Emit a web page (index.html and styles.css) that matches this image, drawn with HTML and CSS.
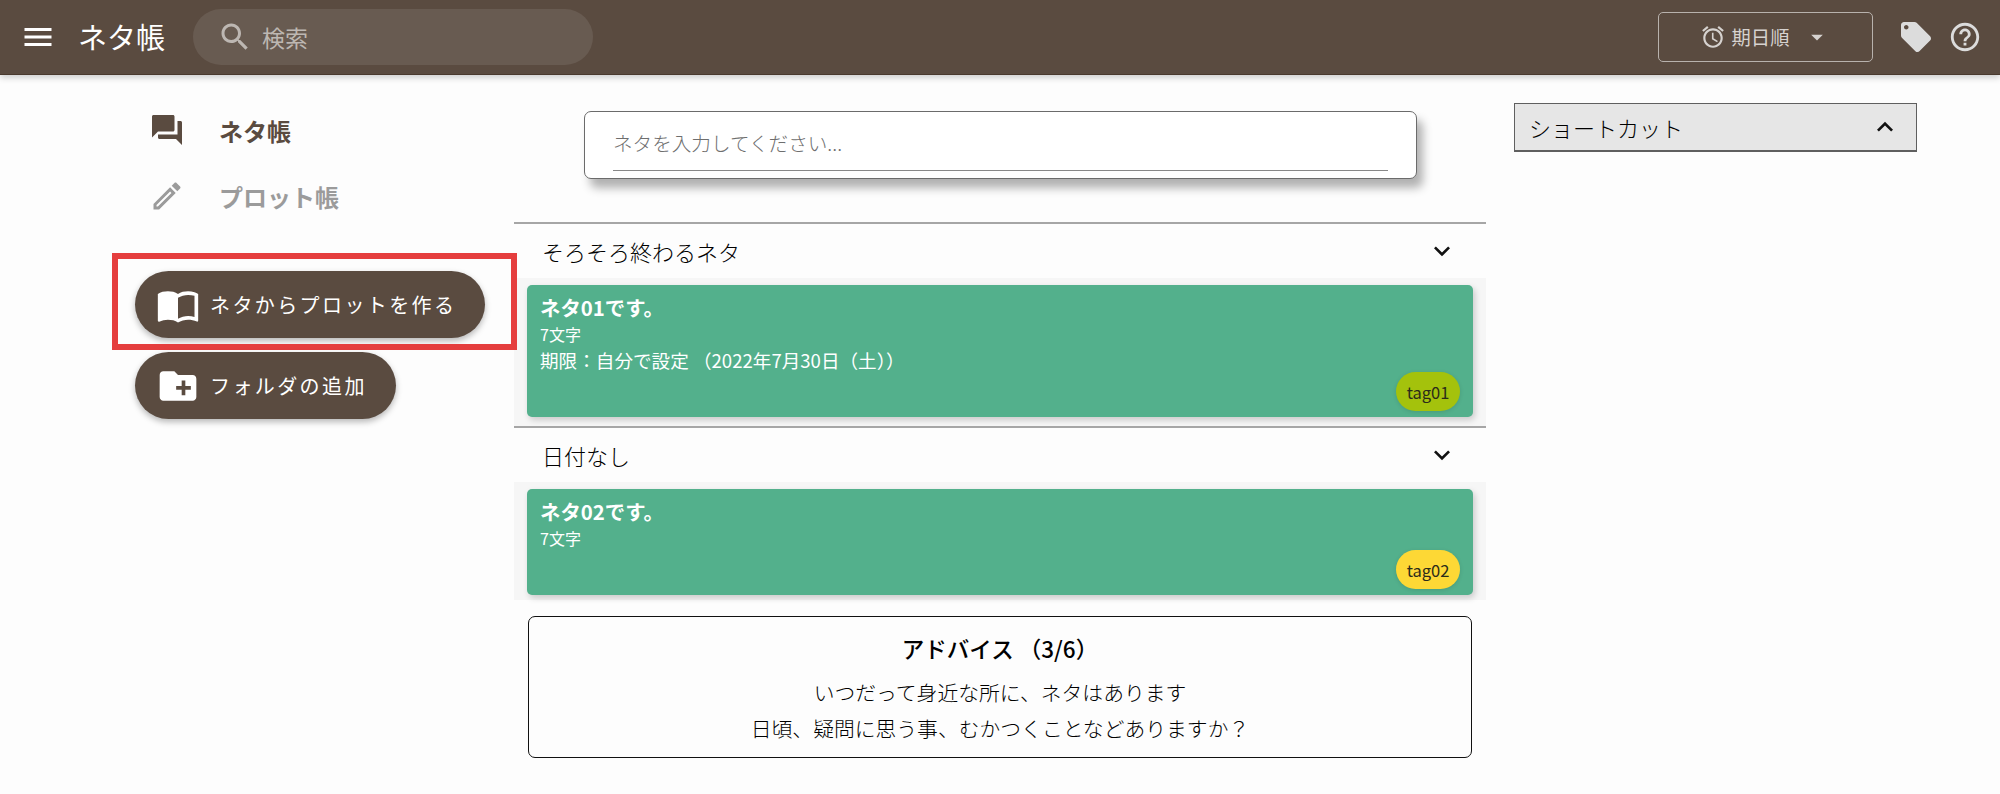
FILE: index.html
```html
<!DOCTYPE html>
<html lang="ja">
<head>
    <meta charset="UTF-8">
    <meta name="viewport" content="width=device-width, initial-scale=1.0">
    <title>ネタ帳</title>
    <link rel="stylesheet" href="styles.css">
</head>
<body>
    <header class="app-bar">
        <svg class="icon menu-icon" viewBox="0 0 24 24"><path d="M3 18h18v-2H3v2zm0-5h18v-2H3v2zm0-7v2h18V6H3z"/></svg>
        <div class="app-title">ネタ帳</div>
        <div class="search-box">
            <svg class="icon search-icon" viewBox="0 0 24 24"><path d="M15.5 14h-.79l-.28-.27C15.41 12.59 16 11.11 16 9.5 16 5.91 13.09 3 9.5 3S3 5.91 3 9.5 5.91 16 9.5 16c1.61 0 3.09-.59 4.23-1.57l.27.28v.79l5 4.99L20.49 19l-4.99-5zm-6 0C7.01 14 5 11.99 5 9.5S7.01 5 9.5 5 14 7.01 14 9.5 11.99 14 9.5 14z"/></svg>
            <span>検索</span>
        </div>
        <div class="sort-button">
            <svg class="icon alarm-icon" viewBox="0 0 24 24"><path d="M22 5.72l-4.6-3.86-1.29 1.53 4.6 3.86L22 5.72zM7.88 3.39L6.6 1.86 2 5.71l1.29 1.53 4.59-3.85zM12.5 8H11v6l4.75 2.85.75-1.23-4-2.37V8zM12 4c-4.97 0-9 4.03-9 9s4.03 9 9 9c4.97 0 9-4.03 9-9s-4.03-9-9-9zm0 16c-3.87 0-7-3.13-7-7s3.13-7 7-7 7 3.13 7 7-3.13 7-7 7z"/></svg>
            <span>期日順</span>
            <svg class="icon caret-icon" viewBox="0 0 24 24"><path d="M7 10l5 5 5-5z"/></svg>
        </div>
        <svg class="icon tag-icon" viewBox="0 0 24 24"><path d="M21.41 11.58l-9-9C12.05 2.22 11.55 2 11 2H4c-1.1 0-2 .9-2 2v7c0 .55.22 1.05.59 1.42l9 9c.36.36.86.58 1.41.58.55 0 1.05-.22 1.41-.59l7-7c.37-.36.59-.86.59-1.41 0-.55-.23-1.06-.59-1.42zM5.5 7C4.67 7 4 6.33 4 5.5S4.67 4 5.5 4 7 4.67 7 5.5 6.33 7 5.5 7z"/></svg>
        <svg class="icon help-icon" viewBox="0 0 24 24"><path d="M11 18h2v-2h-2v2zm1-16C6.48 2 2 6.48 2 12s4.48 10 10 10 10-4.48 10-10S17.52 2 12 2zm0 18c-4.41 0-8-3.59-8-8s3.59-8 8-8 8 3.59 8 8-3.59 8-8 8zm0-14c-2.21 0-4 1.79-4 4h2c0-1.1.9-2 2-2s2 .9 2 2c0 2-3 1.75-3 5h2c0-2.25 3-2.5 3-5 0-2.21-1.79-4-4-4z"/></svg>
    </header>

    <main class="layout">
        <aside class="sidebar">
            <div class="nav-item active">
                <svg class="icon nav-icon" viewBox="0 0 24 24"><path d="M21 6h-2v9H6v2c0 .55.45 1 1 1h11l4 4V7c0-.55-.45-1-1-1zm-4 6V3c0-.55-.45-1-1-1H3c-.55 0-1 .45-1 1v14l4-4h10c.55 0 1-.45 1-1z"/></svg>
                <span>ネタ帳</span>
            </div>
            <div class="nav-item">
                <svg class="icon nav-icon" viewBox="0 0 24 24"><path d="M14.06 9.02l.92.92L5.92 19H5v-.92l9.06-9.06M17.66 3c-.25 0-.51.1-.7.29l-1.83 1.83 3.75 3.75 1.83-1.83c.39-.39.39-1.02 0-1.41l-2.34-2.34c-.2-.2-.45-.29-.71-.29zm-3.6 3.19L3 17.25V21h3.75L17.81 9.94l-3.75-3.75z"/></svg>
                <span>プロット帳</span>
            </div>
            <div class="fab first-fab">
                <svg class="icon fab-icon" viewBox="0 0 24 24"><path d="M21 5c-1.11-.35-2.33-.5-3.5-.5-1.95 0-4.05.4-5.5 1.5-1.45-1.1-3.55-1.5-5.5-1.5S2.45 4.9 1 6v14.65c0 .25.25.5.5.5.1 0 .15-.05.25-.05C3.1 20.45 5.05 20 6.5 20c1.95 0 4.05.4 5.5 1.5 1.35-.85 3.8-1.5 5.5-1.5 1.65 0 3.35.3 4.75 1.05.1.05.15.05.25.05.25 0 .5-.25.5-.5V6c-.6-.45-1.25-.75-2-1zm0 13.5c-1.1-.35-2.3-.5-3.5-.5-1.7 0-4.15.65-5.5 1.5V8c1.35-.85 3.8-1.5 5.5-1.5 1.2 0 2.4.15 3.5.5v11.5z"/></svg>
                <span>ネタからプロットを作る</span>
                <div class="highlight"></div>
            </div>
            <div class="fab">
                <svg class="icon fab-icon" viewBox="0 0 24 24"><path d="M20 6h-8l-2-2H4c-1.11 0-1.99.89-1.99 2L2 18c0 1.11.89 2 2 2h16c1.11 0 2-.89 2-2V8c0-1.11-.89-2-2-2zm-1 8h-3v3h-2v-3h-3v-2h3V9h2v3h3v2z"/></svg>
                <span>フォルダの追加</span>
            </div>
        </aside>

        <section class="content">
            <div class="input-card">
                <div class="input-line">ネタを入力してください...</div>
            </div>

            <div class="group first-group">
                <div class="group-head">
                    <span>そろそろ終わるネタ</span>
                    <svg class="icon chevron" viewBox="0 0 24 24"><path d="M16.59 8.59L12 13.17 7.41 8.59 6 10l6 6 6-6z"/></svg>
                </div>
                <div class="group-body">
                    <div class="note-card tall">
                        <div class="note-title">ネタ01です。</div>
                        <div class="note-count">7文字</div>
                        <div class="note-limit">期限：自分で設定 （2022年7月30日（土））</div>
                        <div class="tag tag-green">tag01</div>
                    </div>
                </div>
            </div>

            <div class="group last-group">
                <div class="group-head">
                    <span>日付なし</span>
                    <svg class="icon chevron" viewBox="0 0 24 24"><path d="M16.59 8.59L12 13.17 7.41 8.59 6 10l6 6 6-6z"/></svg>
                </div>
                <div class="group-body">
                    <div class="note-card">
                        <div class="note-title">ネタ02です。</div>
                        <div class="note-count">7文字</div>
                        <div class="tag tag-yellow">tag02</div>
                    </div>
                </div>
            </div>

            <div class="advice">
                <div class="advice-title">アドバイス （3/6）</div>
                <div class="advice-text">いつだって身近な所に、ネタはあります</div>
                <div class="advice-text">日頃、疑問に思う事、むかつくことなどありますか？</div>
            </div>
        </section>

        <aside class="right-panel">
            <div class="shortcut">
                <span>ショートカット</span>
                <svg class="icon chevron" viewBox="0 0 24 24"><path d="M12 8l-6 6 1.41 1.41L12 10.83l4.59 4.58L18 14z"/></svg>
            </div>
        </aside>
    </main>
</body>
</html>
```

FILE: styles.css
```css
* {
    box-sizing: border-box;
}
body {
    margin: 0;
    background-color: #fdfdfd;
    color: #1c1c1c;
    font-family: "Noto Sans CJK JP", "Noto Sans", sans-serif;
    overflow: hidden;
}
.icon {
    display: block;
    flex: none;
    fill: currentColor;
}

/* app bar */
.app-bar {
    display: flex;
    align-items: center;
    height: 75px;
    padding-left: 20px;
    background-color: #5a4b40;
    border-bottom: 1px solid #4a3a2e;
    box-shadow: 0 3px 6px rgba(0, 0, 0, 0.18);
    color: #fff;
}
.menu-icon {
    width: 36px;
    height: 36px;
}
.app-title {
    width: 88px;
    margin-left: 22px;
    padding-bottom: 2px;
    font-size: 29px;
    line-height: 1;
    white-space: nowrap;
}
.search-box {
    display: flex;
    align-items: center;
    width: 400px;
    height: 56px;
    margin-left: 27px;
    margin-bottom: 1px;
    padding-left: 24px;
    border-radius: 28px;
    background-color: rgba(255, 255, 255, 0.09);
    color: #bdb7b2;
    font-size: 23px;
}
.search-icon {
    width: 36px;
    height: 36px;
    margin-right: 9px;
}
.sort-button {
    display: flex;
    align-items: center;
    justify-content: center;
    width: 215px;
    height: 50px;
    margin-left: auto;
    border: 1px solid #b8b2ad;
    border-radius: 5px;
    color: #d6d2cf;
    font-size: 19.3px;
}
.alarm-icon {
    width: 26px;
    height: 26px;
    margin-right: 6px;
}
.caret-icon {
    width: 28px;
    height: 28px;
    margin-left: 14px;
}
.tag-icon {
    width: 36px;
    height: 36px;
    margin-left: 25px;
    color: #dcdcdc;
}
.help-icon {
    width: 34px;
    height: 34px;
    margin-left: 14px;
    margin-right: 18px;
    color: #dcdcdc;
}

/* page columns */
.layout {
    display: flex;
    align-items: flex-start;
}
.sidebar {
    flex: none;
    width: 514px;
    padding: 22px 0 0 135px;
}
.nav-item {
    display: flex;
    align-items: center;
    height: 66px;
    color: #9b9b9b;
    font-size: 24px;
    font-weight: 700;
}
.nav-item.active {
    color: #5a4b40;
}
.nav-icon {
    width: 36px;
    height: 36px;
    margin-left: 14px;
    margin-right: 34px;
}
.fab {
    position: relative;
    display: flex;
    align-items: center;
    width: max-content;
    height: 67px;
    margin-bottom: 14px;
    padding: 0 29px 0 21px;
    border-radius: 34px;
    background-color: #5a4b40;
    box-shadow: 0 3px 6px rgba(0, 0, 0, 0.28);
    color: #fff;
    font-size: 20px;
    letter-spacing: 2.4px;
}
.first-fab {
    margin-top: 42px;
}
.fab-icon {
    width: 44px;
    height: 44px;
    margin-right: 10px;
}
.highlight {
    position: absolute;
    top: -18px;
    left: -23px;
    width: 405px;
    height: 97px;
    border: 6px solid #e53e3e;
}

/* center column */
.content {
    flex: none;
    width: 972px;
    padding-top: 36px;
}
.input-card {
    width: 833px;
    height: 68px;
    margin-left: 70px;
    padding: 0 28px;
    border: 1px solid #6b6b6b;
    border-radius: 7px;
    background-color: #fff;
    box-shadow: 6px 9px 10px rgba(0, 0, 0, 0.3);
}
.input-line {
    height: 59px;
    padding-top: 17px;
    border-bottom: 1px solid #888;
    color: #6e6e6e;
    font-size: 19.6px;
    font-weight: 300;
    line-height: 27px;
}
.first-group {
    margin-top: 43px;
}
.group {
    border-top: 2px solid #a6a6a6;
}
.group-head {
    display: flex;
    align-items: center;
    justify-content: space-between;
    height: 54px;
    padding: 0 28px;
    color: #000;
    font-size: 22px;
    font-weight: 300;
}
.chevron {
    width: 32px;
    height: 32px;
    color: #111;
}
.group-body {
    padding: 7px 13px 9px;
    background-color: #f6f6f6;
}
.last-group .group-body {
    padding-bottom: 5px;
}
.note-card {
    position: relative;
    height: 106px;
    padding: 7px 13px;
    border-radius: 5px;
    background-color: #53b08c;
    box-shadow: 2px 3px 6px rgba(0, 0, 0, 0.18);
    color: #fff;
}
.note-card.tall {
    height: 132px;
}
.note-title {
    font-size: 20.4px;
    font-weight: 700;
    line-height: 30px;
}
.note-count {
    font-size: 16px;
    line-height: 25px;
}
.note-limit {
    font-size: 18.6px;
    line-height: 25px;
}
.tag {
    position: absolute;
    right: 13px;
    bottom: 6px;
    width: 64px;
    height: 39px;
    border-radius: 20px;
    box-shadow: 0 1px 4px rgba(0, 0, 0, 0.12);
    color: #2b2b1a;
    font-size: 16.5px;
    line-height: 40px;
    text-align: center;
}
.tag-green {
    background-color: #a4c20c;
}
.tag-yellow {
    background-color: #fdd835;
}
.advice {
    width: 944px;
    height: 142px;
    margin: 16px 0 0 14px;
    padding-top: 13px;
    border: 1px solid #111;
    border-radius: 7px;
    color: #000;
    text-align: center;
}
.advice-title {
    margin-bottom: 8px;
    font-size: 22.5px;
    font-weight: 500;
    line-height: 36px;
}
.advice-text {
    font-size: 20.8px;
    font-weight: 300;
    line-height: 36px;
}

/* right column */
.right-panel {
    flex: none;
    width: 403px;
    margin-left: 28px;
    padding-top: 28px;
}
.shortcut {
    display: flex;
    align-items: center;
    justify-content: space-between;
    height: 49px;
    padding: 0 15px 0 14px;
    border: 1px solid #5f5f5f;
    border-bottom-width: 2px;
    background-color: #e6e6e6;
    color: #000;
    font-size: 22px;
    font-weight: 300;
}
```
